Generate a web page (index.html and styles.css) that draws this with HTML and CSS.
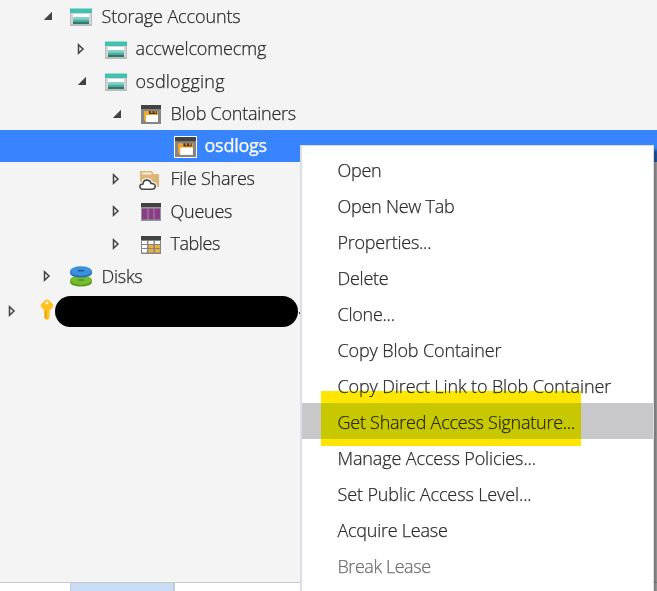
FILE: index.html
```html
<!DOCTYPE html>
<html lang="en">
<head>
<meta charset="utf-8">
<title>Storage Explorer</title>
<link rel="stylesheet" href="styles.css">
</head>
<body>
<svg class="defs" aria-hidden="true">
  <symbol id="open" viewBox="0 0 10 10"><path d="M9 .8V9H.8z" fill="#424242"/></symbol>
  <symbol id="closed" viewBox="0 0 8 12"><path d="M1.500 1.800v8.400L6 6z" fill="#f4f4f4" stroke="#424242" stroke-width="1.500"/></symbol>
  <symbol id="storage" viewBox="0 0 22 18">
    <path d="M0 4h22v14H0z" fill="#b8bdbd"/><path d="M1 5h20v11H1z" fill="#d5d7d7"/>
    <path d="M0 .5h22V5H0z" fill="#3fc2b1"/><path d="M3 6h16v3H3z" fill="#fff"/>
    <path d="M3 9h16v2.500H3z" fill="#83d3ca"/><path d="M3 11.500h16v2H3z" fill="#43b7a7"/><path d="M3 13.500h16V16H3z" fill="#31796f"/>
  </symbol>
  <symbol id="blob" viewBox="0 0 20 19">
    <path d="M0 0h20v19H0z" fill="#858585"/><path d="M0 0h20v4H0z" fill="#424242"/>
    <path d="M3 6h14v11H5l-2-2z" fill="#f2a52b"/><path d="M8 6h8v3H8z" fill="#4c3b22"/><path d="M10 6h1.500v2H10zM13.500 6H15v2h-1.500z" fill="#d59533"/>
    <path d="M5 10h12v7H5z" fill="#fff"/>
  </symbol>
  <symbol id="share" viewBox="0 0 21 21">
    <path d="M1 1h12l1.500 3H20v13H1z" fill="#deb575"/><path d="M3 2.500h9l1 2H3z" fill="#f5ebdc"/>
    <path d="M4 19.200C-.2 19.200-.1 14 4 14c.3-5 7-5.200 8-.5 5.500-.5 5.500 5.700 1 5.700z" fill="#fff" stroke="#f4f4f4" stroke-width="4"/>
    <path d="M4 19.200C-.2 19.200-.1 14 4 14c.3-5 7-5.200 8-.5 5.500-.5 5.500 5.700 1 5.700z" fill="#fff" stroke="#484848" stroke-width="1.600"/>
  </symbol>
  <symbol id="queue" viewBox="0 0 20 18"><path d="M0 0h20v18H0z" fill="#969696"/><path d="M0 0h20v4H0z" fill="#424242"/><path d="M1 5.500h5.500v11H1zm6.500 0h5v11h-5zm6 0H19v11h-5.500z" fill="#8a3c88"/></symbol>
  <symbol id="table" viewBox="0 0 20 18"><path d="M0 0h20v18H0z" fill="#858585"/><path d="M0 0h20v4H0z" fill="#424242"/><path d="M1 5h5v3H1zm6.500 0h5v3h-5zM14 5h5v3h-5zM1 9h5v3H1zm0 4h5v3.500H1z" fill="#fff"/><path d="M7.500 9h5v3h-5zM14 9h5v3h-5zm-6.500 4h5v3.500h-5zm6.500 0h5v3.500h-5z" fill="#e9b33b"/></symbol>
  <symbol id="disk" viewBox="0 0 22 21">
    <path d="M0 14v2c0 6 22 6 22 0v-2z" fill="#599c20"/><ellipse cx="11" cy="14" rx="11" ry="4.700" fill="#75bd2c"/><ellipse cx="11" cy="14" rx="3.500" ry="1" fill="#599c20"/>
    <path d="M0 5v2c0 6 22 6 22 0V5z" fill="#2671ba"/><ellipse cx="11" cy="5" rx="11" ry="4.700" fill="#3c91df"/><ellipse cx="11" cy="4.700" rx="3.500" ry=".9" fill="#205b98"/>
  </symbol>
  <symbol id="key" viewBox="0 0 13 21"><path fill-rule="evenodd" d="M4.500 1.300Q6.500-.5 8.500 1.300l3.800 4q1 1.500 0 3L9 11.500v7.700L6.500 21 4 19.200v-7.700L.7 8.300q-1-1.500 0-3zM6.500 2.200a1.500 1.500 0 1 0 0 3 1.500 1.500 0 0 0 0-3z" fill="#ffc31b"/><path d="M4 11.500h2v8.300l-2-.6z" fill="#f0a20c"/></symbol>
</svg>
<div class="app">
  <div class="tree">
    <div class="row l1"><svg class="open"><use href="#open"/></svg><svg class="icon storage"><use href="#storage"/></svg><span class="loose">Storage Accounts</span></div>
    <div class="row l2"><svg class="closed"><use href="#closed"/></svg><svg class="icon storage"><use href="#storage"/></svg><span class="loose">accwelcomecmg</span></div>
    <div class="row l2"><svg class="open"><use href="#open"/></svg><svg class="icon storage"><use href="#storage"/></svg><span class="looser">osdlogging</span></div>
    <div class="row l3"><svg class="open"><use href="#open"/></svg><svg class="icon blob"><use href="#blob"/></svg><span>Blob Containers</span></div>
    <div class="row l4 selected"><svg class="icon blob"><use href="#blob"/></svg><span>osdlogs</span></div>
    <div class="row l3"><svg class="closed"><use href="#closed"/></svg><svg class="icon share"><use href="#share"/></svg><span>File Shares</span></div>
    <div class="row l3"><svg class="closed"><use href="#closed"/></svg><svg class="icon queue"><use href="#queue"/></svg><span>Queues</span></div>
    <div class="row l3"><svg class="closed"><use href="#closed"/></svg><svg class="icon queue"><use href="#table"/></svg><span class="tight">Tables</span></div>
    <div class="row l1"><svg class="closed"><use href="#closed"/></svg><svg class="icon disk"><use href="#disk"/></svg><span>Disks</span></div>
    <div class="row l0"><svg class="closed"><use href="#closed"/></svg><svg class="key"><use href="#key"/></svg><div class="redacted"></div><i class="dot"></i></div>
  </div>
  <div class="footer"><div class="tab"></div></div>
</div>
<div class="menu">
  <div class="item"><span>Open</span></div>
  <div class="item"><span>Open New Tab</span></div>
  <div class="item"><span>Properties...</span></div>
  <div class="item"><span>Delete</span></div>
  <div class="item"><span>Clone...</span></div>
  <div class="item"><span class="loose">Copy Blob Container</span></div>
  <div class="item"><span class="loose">Copy Direct Link to Blob Container</span></div>
  <div class="item hover"><span>Get Shared Access Signature...</span></div>
  <div class="item"><span class="loose">Manage Access Policies...</span></div>
  <div class="item"><span class="loose">Set Public Access Level...</span></div>
  <div class="item"><span>Acquire Lease</span></div>
  <div class="item disabled"><span class="tight">Break Lease</span></div>
</div>
<div class="marker"></div>
</body>
</html>
```
FILE: styles.css
```css
* { box-sizing: border-box; }
body { margin: 0; width: 657px; height: 591px; overflow: hidden; position: relative; background: #f4f4f4; color: #2c2c2c; font: 400 18px/32px "Open Sans", "Noto Sans", sans-serif; }
.defs { position: absolute; width: 0; height: 0; }
svg { display: block; flex: none; }
.app { height: 591px; display: flex; flex-direction: column; }
.tree { flex: 1; }
.row { display: flex; align-items: center; height: 32.5px; white-space: nowrap; font-weight: 300; letter-spacing: -.25px; -webkit-text-stroke: .25px currentColor; }
.row span { margin: -1.500px 0 0 -.5px; }
.l0 { padding-left: 8px; height: 37px; }
.l1 { padding-left: 43px; }
.l2 { padding-left: 77px; }
.l3 { padding-left: 112px; }
.l4 { padding-left: 174px; }
.open { width: 10px; height: 10px; margin-right: 17px; }
.closed { width: 8px; height: 12px; margin-right: 19px; }
.icon { margin-top: 2px; margin-right: 10px; }
.storage { width: 22px; height: 18px; }
.l2 .storage { margin-left: 1px; margin-right: 9px; }
.blob { width: 20px; height: 19px; margin-left: 2px; }
.share { width: 21px; height: 21px; margin-top: 4px; margin-right: 11px; }
.queue { width: 20px; height: 18px; margin-left: 2px; }
.disk { width: 22px; height: 21px; margin-top: 0; }
.key { width: 14px; height: 21px; margin: -3px 0 0 5px; }
.selected { height: 32px; margin-bottom: .5px; background: #3884ff; color: #fff; font-weight: 400; }
.selected .blob { width: 23px; height: 22px; margin: 1px 8px 0 0; border: 1px solid #fff; }
.redacted { width: 243px; height: 31px; margin: 1px 0 0 1px; border-radius: 16px; background: #000; }
.dot { width: 1px; height: 2px; background: #444; margin: 4px 0 0 1px; }
.footer { height: 9px; border-top: 1px solid #c8c8c8; background: #fff; }
.tab { width: 105px; height: 8px; margin-left: 70px; background: #c9def5; border: solid #c5cad1; border-width: 0 2px 0 1px; }
.menu { position: absolute; left: 300px; top: 145px; width: 354px; height: 446px; padding-top: 5px; background: #fff; border: solid #dadfe5; border-width: 1px 1px 0 2px; box-shadow: 4px 5px 3px rgba(0,0,0,.5); -webkit-text-stroke: .25px currentColor; }
.item { height: 36px; padding-left: 35.5px; line-height: 38px; white-space: nowrap; font-weight: 300; letter-spacing: -.25px; }
.hover { background: #c8c8ca; }
.disabled { color: #707070; }
.loose { letter-spacing: -.12px; }
.looser { letter-spacing: .22px; }
.tight { letter-spacing: -.45px; }
.marker { position: absolute; left: 321px; top: 391px; width: 260px; height: 55px; background: #ffe600; mix-blend-mode: darken; }
```
